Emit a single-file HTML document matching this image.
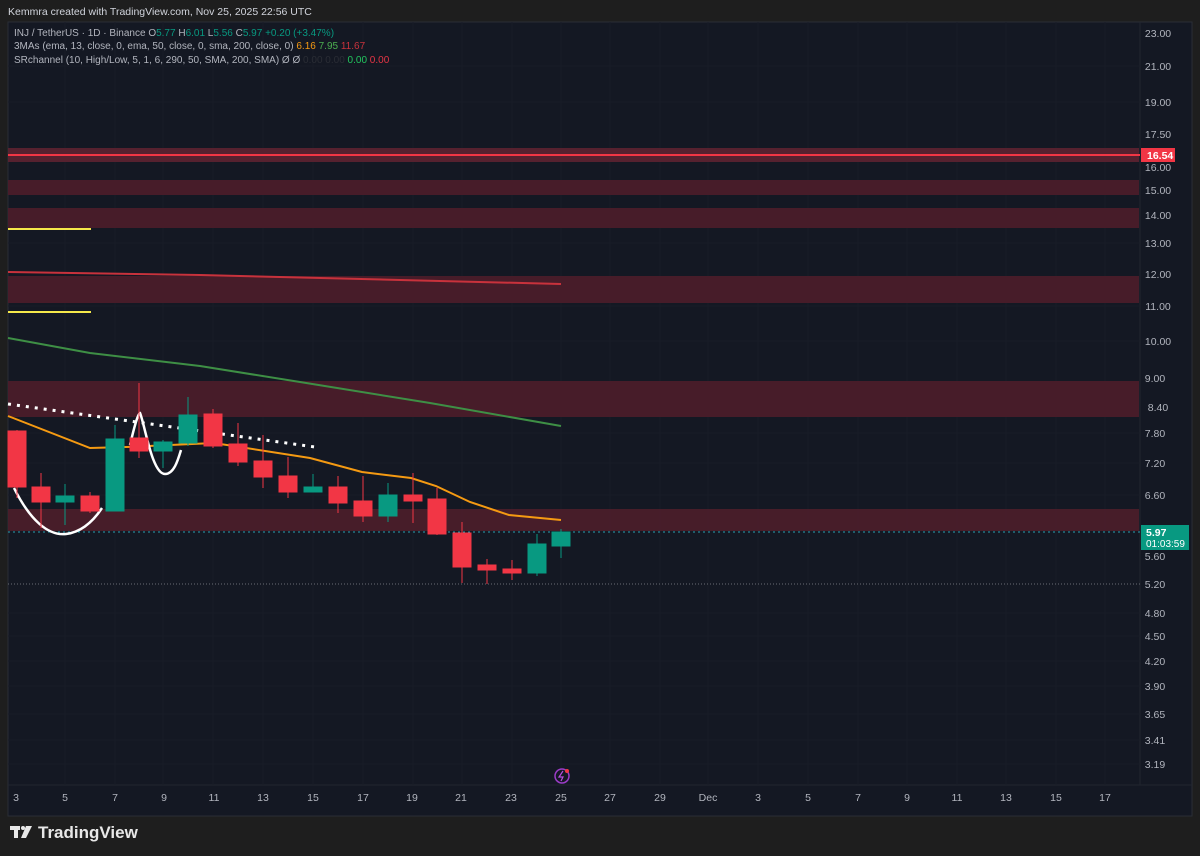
<!DOCTYPE html>
<html><head><meta charset="utf-8"><style>
body{margin:0;background:#1e1e1e;width:1200px;height:856px;overflow:hidden;font-family:"Liberation Sans",sans-serif}
svg{display:block}
</style></head><body>
<svg width="1200" height="856" xmlns="http://www.w3.org/2000/svg" font-family="Liberation Sans, sans-serif">
<rect width="1200" height="856" fill="#1e1e1e"/>
<rect x="8" y="22" width="1184" height="794" fill="#141823" stroke="#2a2d35"/>
<line x1="1140" y1="22" x2="1140" y2="785" stroke="#22262f"/>
<line x1="8" y1="785" x2="1192" y2="785" stroke="#22262f"/>
<g stroke="#181c27">
<line x1="65" y1="22" x2="65" y2="785"/><line x1="115" y1="22" x2="115" y2="785"/><line x1="163" y1="22" x2="163" y2="785"/><line x1="213" y1="22" x2="213" y2="785"/><line x1="263" y1="22" x2="263" y2="785"/><line x1="313" y1="22" x2="313" y2="785"/><line x1="363" y1="22" x2="363" y2="785"/><line x1="413" y1="22" x2="413" y2="785"/><line x1="462" y1="22" x2="462" y2="785"/><line x1="512" y1="22" x2="512" y2="785"/><line x1="561" y1="22" x2="561" y2="785"/><line x1="610" y1="22" x2="610" y2="785"/><line x1="660" y1="22" x2="660" y2="785"/><line x1="708" y1="22" x2="708" y2="785"/><line x1="758" y1="22" x2="758" y2="785"/><line x1="808" y1="22" x2="808" y2="785"/><line x1="858" y1="22" x2="858" y2="785"/><line x1="907" y1="22" x2="907" y2="785"/><line x1="957" y1="22" x2="957" y2="785"/><line x1="1006" y1="22" x2="1006" y2="785"/><line x1="1056" y1="22" x2="1056" y2="785"/><line x1="1105" y1="22" x2="1105" y2="785"/>
<line x1="8" y1="66" x2="1140" y2="66"/><line x1="8" y1="102" x2="1140" y2="102"/><line x1="8" y1="190" x2="1140" y2="190"/><line x1="8" y1="243" x2="1140" y2="243"/><line x1="8" y1="306" x2="1140" y2="306"/><line x1="8" y1="341" x2="1140" y2="341"/><line x1="8" y1="433" x2="1140" y2="433"/><line x1="8" y1="463" x2="1140" y2="463"/><line x1="8" y1="495" x2="1140" y2="495"/><line x1="8" y1="613" x2="1140" y2="613"/><line x1="8" y1="636" x2="1140" y2="636"/><line x1="8" y1="661" x2="1140" y2="661"/><line x1="8" y1="686" x2="1140" y2="686"/><line x1="8" y1="714" x2="1140" y2="714"/><line x1="8" y1="740" x2="1140" y2="740"/><line x1="8" y1="764" x2="1140" y2="764"/>
</g>
<g fill="#4a1d2a" opacity="0.95">
<rect x="8" y="148" width="1131" height="14" fill="#5a2230"/>
<rect x="8" y="180" width="1131" height="15"/>
<rect x="8" y="208" width="1131" height="20"/>
<rect x="8" y="276" width="1131" height="27"/>
<rect x="8" y="381" width="1131" height="36"/>
<rect x="8" y="509" width="1131" height="22"/>
</g>
<line x1="8" y1="155" x2="1140" y2="155" stroke="#f23645" stroke-width="2"/>
<line x1="8" y1="532" x2="1140" y2="532" stroke="#2a9fb0" stroke-dasharray="2,3"/>
<line x1="8" y1="584" x2="1140" y2="584" stroke="#6a6d75" stroke-dasharray="1,2"/>
<line x1="8" y1="229" x2="91" y2="229" stroke="#f5e84a" stroke-width="2"/>
<line x1="8" y1="312" x2="91" y2="312" stroke="#f5e84a" stroke-width="2"/>
<polyline points="8,272 200,275 400,280 561,284" fill="none" stroke="#c8323c" stroke-width="2"/>
<polyline points="8,338 90,353 200,366 300,382 430,403 561,426" fill="none" stroke="#3e8f45" stroke-width="2"/>
<polyline points="8,416 90,448 126,447 214,443 310,458 362,472 411,478 436,486 470,502 509,515 561,520" fill="none" stroke="#f59a12" stroke-width="2"/>
<line x1="8" y1="404" x2="315" y2="447" stroke="#fff" stroke-width="3" stroke-dasharray="3,6"/>
<path d="M14,488 C30,520 48,536 66,534 C82,532 94,520 102,508" fill="none" stroke="#fff" stroke-width="2.5"/>
<path d="M130,445 C134,428 138,413 140,413 C145,425 152,474 165,474 C174,474 178,460 181,450" fill="none" stroke="#fff" stroke-width="2.5"/>
<g stroke-width="1">
<g stroke="#f23645" fill="#f23645">
<line x1="17" y1="430" x2="17" y2="498"/><rect x="8" y="431" width="18" height="56"/>
<line x1="41" y1="473" x2="41" y2="528"/><rect x="32" y="487" width="18" height="15"/>
<line x1="90" y1="492" x2="90" y2="513"/><rect x="81" y="496" width="18" height="15"/>
<line x1="139" y1="383" x2="139" y2="458"/><rect x="130" y="438" width="18" height="13"/>
<line x1="213" y1="409" x2="213" y2="448"/><rect x="204" y="414" width="18" height="32"/>
<line x1="238" y1="423" x2="238" y2="466"/><rect x="229" y="444" width="18" height="18"/>
<line x1="263" y1="435" x2="263" y2="488"/><rect x="254" y="461" width="18" height="16"/>
<line x1="288" y1="457" x2="288" y2="498"/><rect x="279" y="476" width="18" height="16"/>
<line x1="338" y1="476" x2="338" y2="513"/><rect x="329" y="487" width="18" height="16"/>
<line x1="363" y1="476" x2="363" y2="522"/><rect x="354" y="501" width="18" height="15"/>
<line x1="413" y1="473" x2="413" y2="523"/><rect x="404" y="495" width="18" height="6"/>
<line x1="437" y1="488" x2="437" y2="535"/><rect x="428" y="499" width="18" height="35"/>
<line x1="462" y1="522" x2="462" y2="583"/><rect x="453" y="533" width="18" height="34"/>
<line x1="487" y1="559" x2="487" y2="584"/><rect x="478" y="565" width="18" height="5"/>
<line x1="512" y1="560" x2="512" y2="580"/><rect x="503" y="569" width="18" height="4"/>
</g>
<g stroke="#089981" fill="#089981">
<line x1="65" y1="484" x2="65" y2="525"/><rect x="56" y="496" width="18" height="6"/>
<line x1="115" y1="425" x2="115" y2="511"/><rect x="106" y="439" width="18" height="72"/>
<line x1="163" y1="440" x2="163" y2="468"/><rect x="154" y="442" width="18" height="9"/>
<line x1="188" y1="397" x2="188" y2="446"/><rect x="179" y="415" width="18" height="28"/>
<line x1="313" y1="474" x2="313" y2="492"/><rect x="304" y="487" width="18" height="5"/>
<line x1="388" y1="483" x2="388" y2="522"/><rect x="379" y="495" width="18" height="21"/>
<line x1="537" y1="534" x2="537" y2="576"/><rect x="528" y="544" width="18" height="29"/>
<line x1="561" y1="529" x2="561" y2="558"/><rect x="552" y="532" width="18" height="14"/>
</g></g>
<g fill="#b2b5be" font-size="10.5" text-anchor="middle">
<text x="1158" y="37">23.00</text><text x="1158" y="70">21.00</text><text x="1158" y="106">19.00</text><text x="1158" y="138">17.50</text><text x="1158" y="171">16.00</text><text x="1158" y="194">15.00</text><text x="1158" y="219">14.00</text><text x="1158" y="247">13.00</text><text x="1158" y="278">12.00</text><text x="1158" y="310">11.00</text><text x="1158" y="345">10.00</text><text x="1158" y="411">8.40</text><text x="1155" y="382">9.00</text><text x="1155" y="437">7.80</text><text x="1155" y="467">7.20</text><text x="1155" y="499">6.60</text><text x="1155" y="560">5.60</text><text x="1155" y="588">5.20</text><text x="1155" y="617">4.80</text><text x="1155" y="640">4.50</text><text x="1155" y="665">4.20</text><text x="1155" y="690">3.90</text><text x="1155" y="718">3.65</text><text x="1155" y="744">3.41</text><text x="1155" y="768">3.19</text>
</g>
<rect x="1141" y="148" width="34" height="14" fill="#f23645"/>
<text x="1147" y="159" fill="#fff" font-size="10.5" font-weight="bold">16.54</text>
<rect x="1141" y="525" width="48" height="25" fill="#089981"/>
<text x="1146" y="536" fill="#fff" font-size="10.5" font-weight="bold">5.97</text>
<text x="1146" y="547" fill="#fff" font-size="10">01:03:59</text>
<g fill="#b2b5be" font-size="10.5" text-anchor="middle">
<text x="16" y="801">3</text><text x="65" y="801">5</text><text x="115" y="801">7</text><text x="164" y="801">9</text><text x="214" y="801">11</text><text x="263" y="801">13</text><text x="313" y="801">15</text><text x="363" y="801">17</text><text x="412" y="801">19</text><text x="461" y="801">21</text><text x="511" y="801">23</text><text x="561" y="801">25</text><text x="610" y="801">27</text><text x="660" y="801">29</text><text x="708" y="801">Dec</text><text x="758" y="801">3</text><text x="808" y="801">5</text><text x="858" y="801">7</text><text x="907" y="801">9</text><text x="957" y="801">11</text><text x="1006" y="801">13</text><text x="1056" y="801">15</text><text x="1105" y="801">17</text>
</g>
<circle cx="562" cy="776" r="7" fill="none" stroke="#9c3cc8" stroke-width="1.5"/>
<path d="M563,771 L559,777 L563,777 L561,781" fill="none" stroke="#b84ee0" stroke-width="1.2"/>
<circle cx="567" cy="771" r="2" fill="#f23645"/>
<text x="8" y="15" fill="#d1d4dc" font-size="10.5">Kemmra created with TradingView.com, Nov 25, 2025 22:56 UTC</text>
<g font-size="10">
<text x="14" y="36" fill="#b2b5be">INJ / TetherUS · 1D · Binance  <tspan>O</tspan><tspan fill="#089981">5.77</tspan> H<tspan fill="#089981">6.01</tspan> L<tspan fill="#089981">5.56</tspan> C<tspan fill="#089981">5.97</tspan> <tspan fill="#089981">+0.20 (+3.47%)</tspan></text>
<text x="14" y="49" fill="#b2b5be">3MAs (ema, 13, close, 0, ema, 50, close, 0, sma, 200, close, 0) <tspan fill="#f59a12">6.16</tspan> <tspan fill="#4caf50">7.95</tspan> <tspan fill="#c8323c">11.67</tspan></text>
<text x="14" y="63" fill="#b2b5be">SRchannel (10, High/Low, 5, 1, 6, 290, 50, SMA, 200, SMA) Ø Ø <tspan fill="#2a2d35">0.00 0.00</tspan> <tspan fill="#22c55e">0.00</tspan> <tspan fill="#e53545">0.00</tspan></text>
</g>
<g fill="#e8e8e8">
<rect x="10" y="826" width="10" height="4"/><rect x="14" y="826" width="4" height="12"/>
<circle cx="23" cy="828" r="2"/><path d="M26,826 L32,826 L26,838 L21,838 Z"/>
<text x="38" y="838" font-size="17" font-weight="bold" fill="#e8e8e8">TradingView</text>
</g>
</svg>
</body></html>
